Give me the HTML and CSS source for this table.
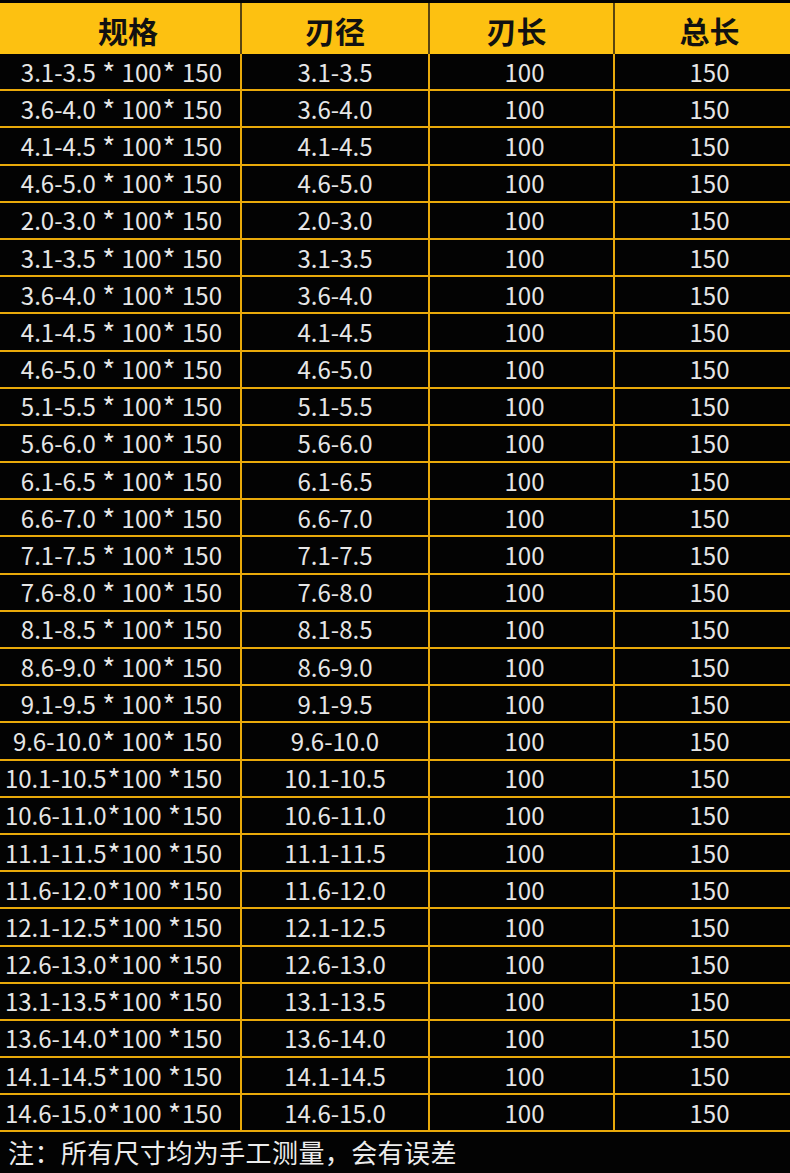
FILE: index.html
```html
<!DOCTYPE html>
<html lang="zh">
<head>
<meta charset="utf-8">
<link rel="stylesheet" href="styles.css">
</head>
<body>
<div class="page">
  <div class="table">
    <div class="row head">
      <div class="cell c1">规格</div>
      <div class="cell c2">刃径</div>
      <div class="cell c3">刃长</div>
      <div class="cell c4">总长</div>
    </div>
    <div class="row"><div class="cell c1">3.1-3.5 <span class="ast">*</span> 100<span class="ast">*</span> 150</div><div class="cell c2">3.1-3.5</div><div class="cell c3">100</div><div class="cell c4">150</div></div>
    <div class="row"><div class="cell c1">3.6-4.0 <span class="ast">*</span> 100<span class="ast">*</span> 150</div><div class="cell c2">3.6-4.0</div><div class="cell c3">100</div><div class="cell c4">150</div></div>
    <div class="row"><div class="cell c1">4.1-4.5 <span class="ast">*</span> 100<span class="ast">*</span> 150</div><div class="cell c2">4.1-4.5</div><div class="cell c3">100</div><div class="cell c4">150</div></div>
    <div class="row"><div class="cell c1">4.6-5.0 <span class="ast">*</span> 100<span class="ast">*</span> 150</div><div class="cell c2">4.6-5.0</div><div class="cell c3">100</div><div class="cell c4">150</div></div>
    <div class="row"><div class="cell c1">2.0-3.0 <span class="ast">*</span> 100<span class="ast">*</span> 150</div><div class="cell c2">2.0-3.0</div><div class="cell c3">100</div><div class="cell c4">150</div></div>
    <div class="row"><div class="cell c1">3.1-3.5 <span class="ast">*</span> 100<span class="ast">*</span> 150</div><div class="cell c2">3.1-3.5</div><div class="cell c3">100</div><div class="cell c4">150</div></div>
    <div class="row"><div class="cell c1">3.6-4.0 <span class="ast">*</span> 100<span class="ast">*</span> 150</div><div class="cell c2">3.6-4.0</div><div class="cell c3">100</div><div class="cell c4">150</div></div>
    <div class="row"><div class="cell c1">4.1-4.5 <span class="ast">*</span> 100<span class="ast">*</span> 150</div><div class="cell c2">4.1-4.5</div><div class="cell c3">100</div><div class="cell c4">150</div></div>
    <div class="row"><div class="cell c1">4.6-5.0 <span class="ast">*</span> 100<span class="ast">*</span> 150</div><div class="cell c2">4.6-5.0</div><div class="cell c3">100</div><div class="cell c4">150</div></div>
    <div class="row"><div class="cell c1">5.1-5.5 <span class="ast">*</span> 100<span class="ast">*</span> 150</div><div class="cell c2">5.1-5.5</div><div class="cell c3">100</div><div class="cell c4">150</div></div>
    <div class="row"><div class="cell c1">5.6-6.0 <span class="ast">*</span> 100<span class="ast">*</span> 150</div><div class="cell c2">5.6-6.0</div><div class="cell c3">100</div><div class="cell c4">150</div></div>
    <div class="row"><div class="cell c1">6.1-6.5 <span class="ast">*</span> 100<span class="ast">*</span> 150</div><div class="cell c2">6.1-6.5</div><div class="cell c3">100</div><div class="cell c4">150</div></div>
    <div class="row"><div class="cell c1">6.6-7.0 <span class="ast">*</span> 100<span class="ast">*</span> 150</div><div class="cell c2">6.6-7.0</div><div class="cell c3">100</div><div class="cell c4">150</div></div>
    <div class="row"><div class="cell c1">7.1-7.5 <span class="ast">*</span> 100<span class="ast">*</span> 150</div><div class="cell c2">7.1-7.5</div><div class="cell c3">100</div><div class="cell c4">150</div></div>
    <div class="row"><div class="cell c1">7.6-8.0 <span class="ast">*</span> 100<span class="ast">*</span> 150</div><div class="cell c2">7.6-8.0</div><div class="cell c3">100</div><div class="cell c4">150</div></div>
    <div class="row"><div class="cell c1">8.1-8.5 <span class="ast">*</span> 100<span class="ast">*</span> 150</div><div class="cell c2">8.1-8.5</div><div class="cell c3">100</div><div class="cell c4">150</div></div>
    <div class="row"><div class="cell c1">8.6-9.0 <span class="ast">*</span> 100<span class="ast">*</span> 150</div><div class="cell c2">8.6-9.0</div><div class="cell c3">100</div><div class="cell c4">150</div></div>
    <div class="row"><div class="cell c1">9.1-9.5 <span class="ast">*</span> 100<span class="ast">*</span> 150</div><div class="cell c2">9.1-9.5</div><div class="cell c3">100</div><div class="cell c4">150</div></div>
    <div class="row"><div class="cell c1">9.6-10.0<span class="ast">*</span> 100<span class="ast">*</span> 150</div><div class="cell c2">9.6-10.0</div><div class="cell c3">100</div><div class="cell c4">150</div></div>
    <div class="row"><div class="cell c1">10.1-10.5<span class="ast">*</span>100 <span class="ast">*</span>150</div><div class="cell c2">10.1-10.5</div><div class="cell c3">100</div><div class="cell c4">150</div></div>
    <div class="row"><div class="cell c1">10.6-11.0<span class="ast">*</span>100 <span class="ast">*</span>150</div><div class="cell c2">10.6-11.0</div><div class="cell c3">100</div><div class="cell c4">150</div></div>
    <div class="row"><div class="cell c1">11.1-11.5<span class="ast">*</span>100 <span class="ast">*</span>150</div><div class="cell c2">11.1-11.5</div><div class="cell c3">100</div><div class="cell c4">150</div></div>
    <div class="row"><div class="cell c1">11.6-12.0<span class="ast">*</span>100 <span class="ast">*</span>150</div><div class="cell c2">11.6-12.0</div><div class="cell c3">100</div><div class="cell c4">150</div></div>
    <div class="row"><div class="cell c1">12.1-12.5<span class="ast">*</span>100 <span class="ast">*</span>150</div><div class="cell c2">12.1-12.5</div><div class="cell c3">100</div><div class="cell c4">150</div></div>
    <div class="row"><div class="cell c1">12.6-13.0<span class="ast">*</span>100 <span class="ast">*</span>150</div><div class="cell c2">12.6-13.0</div><div class="cell c3">100</div><div class="cell c4">150</div></div>
    <div class="row"><div class="cell c1">13.1-13.5<span class="ast">*</span>100 <span class="ast">*</span>150</div><div class="cell c2">13.1-13.5</div><div class="cell c3">100</div><div class="cell c4">150</div></div>
    <div class="row"><div class="cell c1">13.6-14.0<span class="ast">*</span>100 <span class="ast">*</span>150</div><div class="cell c2">13.6-14.0</div><div class="cell c3">100</div><div class="cell c4">150</div></div>
    <div class="row"><div class="cell c1">14.1-14.5<span class="ast">*</span>100 <span class="ast">*</span>150</div><div class="cell c2">14.1-14.5</div><div class="cell c3">100</div><div class="cell c4">150</div></div>
    <div class="row"><div class="cell c1">14.6-15.0<span class="ast">*</span>100 <span class="ast">*</span>150</div><div class="cell c2">14.6-15.0</div><div class="cell c3">100</div><div class="cell c4">150</div></div>
  </div>
  <p class="note">注：所有尺寸均为手工测量，会有误差</p>
</div>
</body>
</html>
```

FILE: styles.css
```css
html, body {
  margin: 0;
  padding: 0;
  background: #000;
}
.page {
  width: 790px;
  height: 1173px;
  padding-top: 3px;
  box-sizing: border-box;
  background: #030303;
  overflow: hidden;
}
.table {
  display: flex;
  flex-direction: column;
}
.row {
  display: grid;
  grid-template-columns: 242px 188px 185px 175px;
  height: 37.2px;
  box-sizing: border-box;
  border-bottom: 2px solid #e9a90a;
}
.row.head {
  height: 51px;
  border-bottom: none;
  background: #fdc111;
}
.cell {
  display: flex;
  align-items: center;
  justify-content: center;
  color: #e6e6e6;
  font-family: "Noto Sans CJK SC", "Noto Sans", sans-serif;
  font-size: 24px;
  line-height: 30px;
  white-space: pre;
  border-right: 2px solid #e9a90a;
}
.ast {
  font-size: 28px;
  line-height: 1;
  vertical-align: -2px;
  margin: 0 1px;
}
.cell.c4 {
  border-right: none;
}
.cell.c1 {
  justify-content: flex-end;
  padding-right: 18px;
}
.cell.c3 {
  padding-left: 6px;
}
.cell.c4 {
  padding-left: 14px;
}
.head .cell {
  color: #111;
  font-weight: 700;
  font-size: 30px;
  line-height: 40px;
  border-right-color: #5a4510;
  padding-top: 2px;
}
.head .cell.c1 {
  justify-content: center;
  padding-right: 0;
  padding-left: 16px;
}
.head .cell.c3 {
  padding-left: 0;
  padding-right: 10px;
}
.note {
  margin: 0;
  padding: 3px 0 0 8px;
  color: #ececec;
  font-family: "Noto Sans CJK SC", sans-serif;
  font-size: 26px;
  line-height: 34px;
  letter-spacing: 0.4px;
}
```
